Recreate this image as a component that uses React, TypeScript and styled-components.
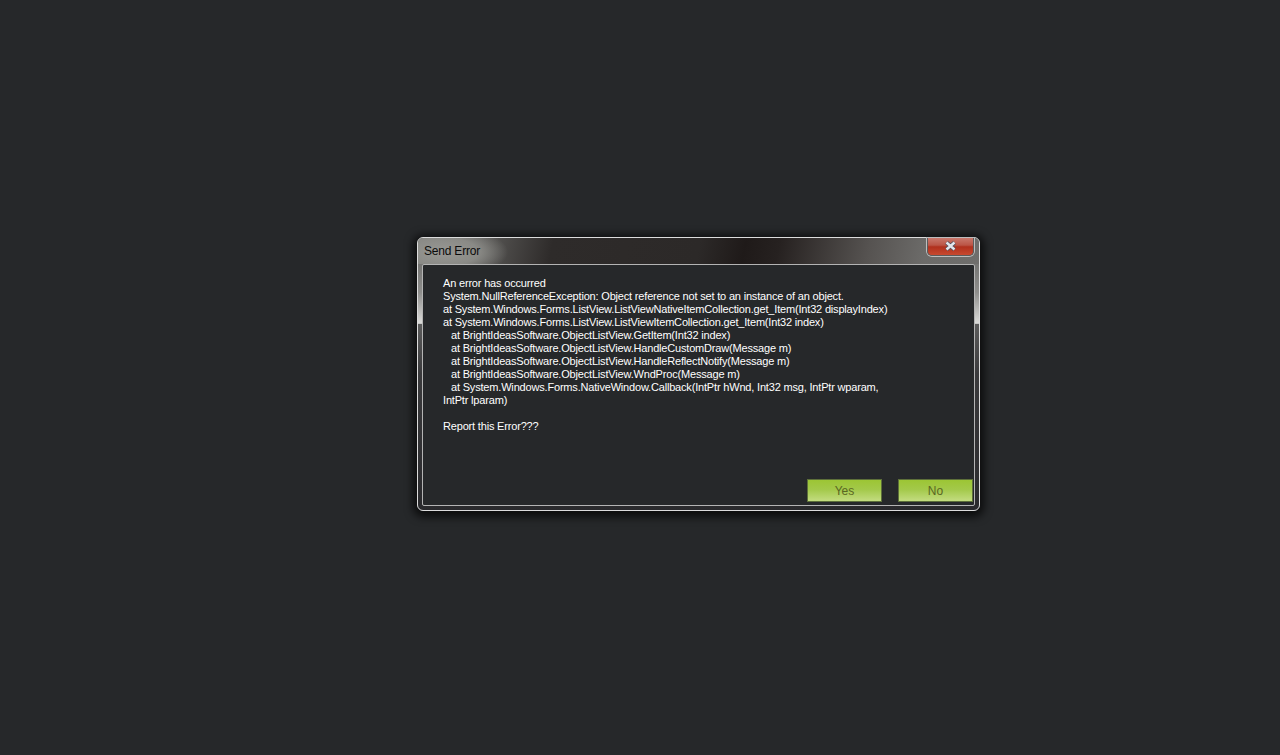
import React from 'react';
import styled, {createGlobalStyle} from "styled-components";

const GlobalStyle = createGlobalStyle`
    html, body {
        margin: 0;
        height: 100%;
        background: #26282a;
    }
    #root {
        height: 100%;
    }
`

const errorLines = [
    {text: "An error has occurred"},
    {text: "System.NullReferenceException: Object reference not set to an instance of an object."},
    {text: "at System.Windows.Forms.ListView.ListViewNativeItemCollection.get_Item(Int32 displayIndex)"},
    {text: "at System.Windows.Forms.ListView.ListViewItemCollection.get_Item(Int32 index)"},
    {text: "at BrightIdeasSoftware.ObjectListView.GetItem(Int32 index)", nested: true},
    {text: "at BrightIdeasSoftware.ObjectListView.HandleCustomDraw(Message m)", nested: true},
    {text: "at BrightIdeasSoftware.ObjectListView.HandleReflectNotify(Message m)", nested: true},
    {text: "at BrightIdeasSoftware.ObjectListView.WndProc(Message m)", nested: true},
    {text: "at System.Windows.Forms.NativeWindow.Callback(IntPtr hWnd, Int32 msg, IntPtr wparam,", nested: true},
    {text: "IntPtr lparam)"},
    {text: "\u00a0"},
    {text: "Report this Error???"},
];

export default function App() {
    return (
        <Desktop>
            <GlobalStyle/>
            <ErrorWindow>
                <TitleBar>
                    <Title>Send Error</Title>
                    <CloseButton aria-label="Close">
                        <svg width="13" height="10" viewBox="0 0 13 10">
                            <path d="M2.5 1.5 L10.5 8.5 M10.5 1.5 L2.5 8.5" stroke="#4a4f5c" strokeWidth="4"/>
                            <path d="M2.5 1.5 L10.5 8.5 M10.5 1.5 L2.5 8.5" stroke="#e4e6ec" strokeWidth="2.4"/>
                        </svg>
                    </CloseButton>
                </TitleBar>
                <ClientArea>
                    <Message>
                        {errorLines.map((line, i) => (
                            <Line key={i} $nested={line.nested}>{line.text}</Line>
                        ))}
                    </Message>
                    <Buttons>
                        <DialogButton>Yes</DialogButton>
                        <DialogButton>No</DialogButton>
                    </Buttons>
                </ClientArea>
            </ErrorWindow>
        </Desktop>
    );
}

const Desktop = styled.div`
    box-sizing: border-box;
    height: 755px;
    padding: 237px 0 0 417px;
    background: #26282a;
    overflow: hidden;
`
const ErrorWindow = styled.div`
    box-sizing: border-box;
    width: 563px;
    height: 274px;
    display: flex;
    flex-direction: column;
    padding: 0 4px 4px;
    border-radius: 6px;
    border: 1px solid #dcdcdc;
    background: linear-gradient(180deg, #5e5e5c 0, #8e8e8c 20%, #dcdcda 31.4%, #5c5c5c 31.6%, #3a3a3c 50%, #2a2a2d 100%);
    box-shadow: 0 2px 9px 4px rgba(0, 0, 0, 0.7);
`
const TitleBar = styled.div`
    display: flex;
    justify-content: space-between;
    height: 26px;
    flex-shrink: 0;
    margin: 0 -4px;
    padding: 0 5px 0 6px;
    border-radius: 5px 5px 0 0;
    background:
        radial-gradient(ellipse 66px 26px at 24px 14px, #989894 0, #8a8a86 55%, rgba(110, 110, 106, 0) 100%),
        linear-gradient(102deg, #62615f 0, #5c5b59 11%, #2e2b2a 24%, #2c2928 50%, #1f1a19 58%, #262120 64%, #565351 80%, #6c6b69 90%, #6f6e6c 100%);
`
const Title = styled.div`
    padding-top: 6px;
    font-family: "Liberation Sans", Arial, sans-serif;
    font-size: 12px;
    line-height: 15px;
    letter-spacing: -0.2px;
    color: #0b0b0b;
`
const CloseButton = styled.button`
    box-sizing: border-box;
    width: 47px;
    height: 18px;
    margin: 0;
    padding: 0 0 2px;
    display: flex;
    align-items: center;
    justify-content: center;
    border: 1px solid #5c5c5c;
    border-top: none;
    border-radius: 0 0 5px 5px;
    background: linear-gradient(180deg, #c9786c 0, #bb5546 42%, #b0301d 52%, #c8492f 100%);
    box-shadow: 0 0 0 1px #bdbdbd;
`
const ClientArea = styled.div`
    flex: 1;
    display: flex;
    flex-direction: column;
    justify-content: space-between;
    padding: 12px 1px 3px 20px;
    border: 1px solid #b4b4b4;
    border-radius: 2px;
    background: #26282a;
`
const Message = styled.div`
    width: 445px;
    font-family: "Liberation Sans", Arial, sans-serif;
    font-size: 11px;
    line-height: 13px;
    letter-spacing: -0.18px;
    color: #ffffff;
`
const Line = styled.div<{$nested?: boolean}>`
    padding-left: ${props => props.$nested ? "8px" : "0"};
    white-space: nowrap;
`
const Buttons = styled.div`
    display: flex;
    justify-content: flex-end;
    gap: 16px;
`
const DialogButton = styled.button`
    box-sizing: border-box;
    width: 75px;
    height: 23px;
    padding: 1px 0 0;
    border: 1px solid #5d6f3a;
    background: linear-gradient(180deg, #9cc534 0, #a3c94a 45%, #c3dc80 100%);
    font-family: "Liberation Sans", Arial, sans-serif;
    font-size: 12px;
    color: #5a6622;
`
